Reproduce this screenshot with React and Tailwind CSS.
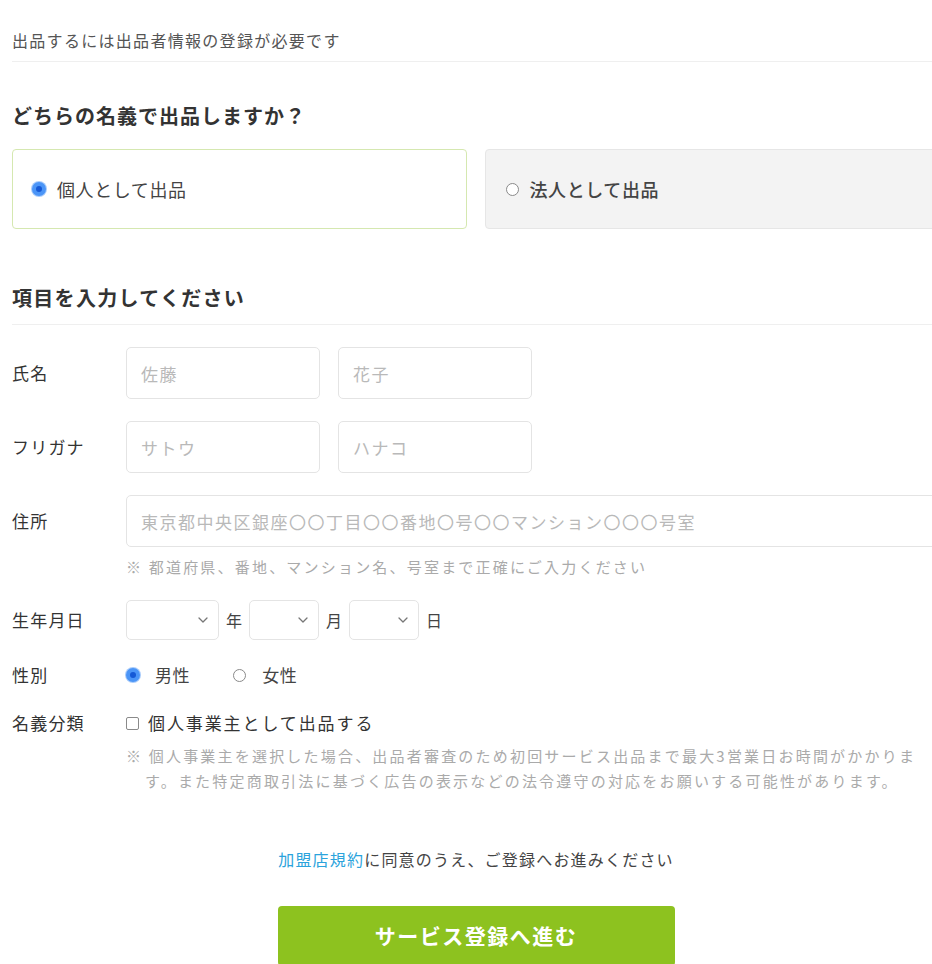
import React from 'react';

const font = { fontFamily: '"Noto Sans CJK JP", "Noto Sans", sans-serif' };

const Radio = ({ checked }) =>
  checked ? (
    <span className="flex h-[14px] w-[14px] shrink-0 items-center justify-center rounded-full bg-[#4b95f7] shadow-[0_0_0_1px_#a9ccfb]">
      <span className="h-[6px] w-[6px] rounded-full bg-[#1559d6]" />
    </span>
  ) : (
    <span className="block h-[13px] w-[13px] shrink-0 rounded-full border border-[#8a8a8a] bg-white" />
  );

const Chevron = () => (
  <svg width="10" height="6" viewBox="0 0 10 6" fill="none" className="text-[#777]">
    <path d="M1 1l4 4 4-4" stroke="currentColor" strokeWidth="1.3" strokeLinecap="round" strokeLinejoin="round" />
  </svg>
);

const TextInput = ({ placeholder, className = '' }) => (
  <input
    type="text"
    placeholder={placeholder}
    className={`h-[52px] rounded-[5px] border border-[#e4e4e4] bg-white px-[14px] text-[17px] tracking-[1.5px] text-[#333] placeholder:text-[#b9b9b9] outline-none ${className}`}
  />
);

const SelectBox = ({ className = '' }) => (
  <div className={`flex h-[40px] items-center justify-end rounded-[5px] border border-[#e4e4e4] bg-white pr-[10px] ${className}`}>
    <Chevron />
  </div>
);

const Row = ({ label, children, className = '' }) => (
  <div className={`flex items-center ${className}`}>
    <div className="w-[114px] shrink-0 text-[17px] leading-[24px] tracking-[1.2px] text-[#333]">{label}</div>
    {children}
  </div>
);

export default function App() {
  return (
    <div className="min-h-screen w-full overflow-hidden bg-white" style={font}>
      <div className="ml-[12px] w-[928px]">
        <div className="border-b border-[#efefef] pb-[11px] pt-[30px] text-[16px] leading-[20px] tracking-[1.3px] text-[#555]">
          出品するには出品者情報の登録が必要です
        </div>

        <h2 className="mt-[41px] text-[20px] font-bold leading-[26px] tracking-[1px] text-[#333]">
          どちらの名義で出品しますか？
        </h2>

        <div className="mt-[20px] flex gap-[18px]">
          <label className="flex h-[80px] flex-1 items-center gap-[11px] rounded-[4px] border border-[#d5e8b0] bg-white pl-[19px] text-[18px] tracking-[0.6px] text-[#444]">
            <Radio checked />
            <span>個人として出品</span>
          </label>
          <label className="flex h-[80px] flex-1 items-center gap-[11px] rounded-[4px] border border-[#e6e6e6] bg-[#f3f3f3] pl-[20px] text-[18px] font-medium tracking-[0.6px] text-[#444]">
            <Radio />
            <span>法人として出品</span>
          </label>
        </div>

        <h2 className="mt-[56px] border-b border-[#efefef] pb-[13px] text-[20px] font-bold leading-[26px] tracking-[1.3px] text-[#333]">
          項目を入力してください
        </h2>

        <Row label="氏名" className="mt-[22px]">
          <div className="flex gap-[18px]">
            <TextInput placeholder="佐藤" className="w-[194px]" />
            <TextInput placeholder="花子" className="w-[194px]" />
          </div>
        </Row>

        <Row label="フリガナ" className="mt-[22px]">
          <div className="flex gap-[18px]">
            <TextInput placeholder="サトウ" className="w-[194px]" />
            <TextInput placeholder="ハナコ" className="w-[194px]" />
          </div>
        </Row>

        <Row label="住所" className="mt-[22px]">
          <TextInput placeholder="東京都中央区銀座〇〇丁目〇〇番地〇号〇〇マンション〇〇〇号室" className="flex-1" />
        </Row>
        <div className="ml-[114px] mt-[10px] text-[15px] leading-[20px] tracking-[2.2px] text-[#aaa]">
          ※ 都道府県、番地、マンション名、号室まで正確にご入力ください
        </div>

        <Row label="生年月日" className="mt-[23px]">
          <div className="flex items-center text-[16px] text-[#444]">
            <SelectBox className="w-[93px]" />
            <span className="mx-[7px]">年</span>
            <SelectBox className="w-[70px]" />
            <span className="mx-[7px]">月</span>
            <SelectBox className="w-[70px]" />
            <span className="ml-[7px]">日</span>
          </div>
        </Row>

        <Row label="性別" className="mt-[23px]">
          <div className="flex h-[24px] items-center text-[17px] leading-[24px] tracking-[0.6px] text-[#444]">
            <Radio checked />
            <span className="ml-[15px]">男性</span>
            <span className="ml-[43px] flex items-center">
              <Radio />
            </span>
            <span className="ml-[16px]">女性</span>
          </div>
        </Row>

        <Row label="名義分類" className="mt-[24px]">
          <label className="flex h-[24px] items-center text-[17px] leading-[24px] tracking-[1.9px] text-[#333]">
            <span className="h-[13px] w-[13px] rounded-[2px] border border-[#8a8a8a] bg-white" />
            <span className="ml-[9px]">個人事業主として出品する</span>
          </label>
        </Row>
        <div className="ml-[114px] mt-[8px] whitespace-nowrap pl-[19px] -indent-[19px] text-[15px] leading-[25px] tracking-[2.2px] text-[#aaa]">
          ※ 個人事業主を選択した場合、出品者審査のため初回サービス出品まで最大3営業日お時間がかかりま
          <br />
          す。また特定商取引法に基づく広告の表示などの法令遵守の対応をお願いする可能性があります。
        </div>

        <p className="mt-[56px] text-center text-[16px] leading-[20px] tracking-[1.2px] text-[#444]">
          <a href="#" className="text-[#2ba3dc]">加盟店規約</a>に同意のうえ、ご登録へお進みください
        </p>

        <div className="mt-[37px] flex justify-center">
          <button className="h-[60px] w-[397px] rounded-[4px] bg-[#8dc21f] text-[21px] font-bold tracking-[1.5px] text-white">
            サービス登録へ進む
          </button>
        </div>
      </div>
    </div>
  );
}
